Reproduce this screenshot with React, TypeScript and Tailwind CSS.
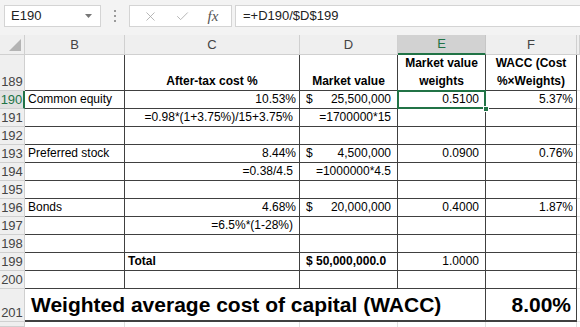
import { X, Check } from 'lucide-react';
import type { ReactNode } from 'react';

const font = { fontFamily: '"Liberation Sans", Arial, sans-serif' };

function Hdr({ children, active = false }: { children?: ReactNode; active?: boolean }) {
  return (
    <div
      className={
        active
          ? 'flex items-center justify-center bg-[#d2d2d2] border-r border-r-[#c6c6c6] border-b-2 border-b-[#217346] text-[#217346] text-[13px]'
          : 'flex items-center justify-center bg-[#efefef] border-r border-b border-[#d0d0d0] text-[#444] text-[13px]'
      }
    >
      {children}
    </div>
  );
}

function Num({ n, active = false }: { n: number | string; active?: boolean }) {
  return (
    <div
      className={
        active
          ? 'flex items-end justify-center bg-[#e1e1e1] border-r-2 border-r-[#217346] border-b border-b-[#d0d0d0] text-[#217346] text-[13px] leading-[17px]'
          : 'flex items-end justify-center bg-[#efefef] border-r border-b border-[#d0d0d0] text-[#444] text-[13px] leading-[17px]'
      }
    >
      {n}
    </div>
  );
}

function Cell({
  children,
  className = '',
  mid = false,
}: {
  children?: ReactNode;
  className?: string;
  mid?: boolean;
}) {
  return (
    <div
      className={`relative flex ${mid ? 'items-center' : 'items-end'} whitespace-nowrap border-r border-b border-[#404040] text-[12px] leading-[17px] text-black ${className}`}
    >
      {children}
    </div>
  );
}

function Acct({ v }: { v: string }) {
  return (
    <Cell className="justify-between pl-[6px] pr-[6px]">
      <span>$</span>
      <span>{v}</span>
    </Cell>
  );
}

function Empty({ n }: { n: number }) {
  return (
    <>
      <Num n={n} />
      <Cell />
      <Cell />
      <Cell />
      <Cell />
      <Cell />
      <div className="border-b border-[#e0e0e0]" />
    </>
  );
}

export default function App() {
  return (
    <div className="w-[580px] h-[327px] overflow-hidden bg-white" style={font}>
      {/* formula bar */}
      <div className="h-[35px] bg-[#f3f3f3] flex items-start pt-[5px] pl-[4px]">
        <div className="w-[97px] h-[22px] bg-white border border-[#d4d4d4] flex items-center justify-between pl-[6px] pr-[8px] text-[13px] text-[#222]">
          <span>E190</span>
          <svg width="7" height="4" viewBox="0 0 7 4">
            <path d="M0 0h7L3.5 4z" fill="#777" />
          </svg>
        </div>
        <div className="w-[28px] h-[22px] flex flex-col items-center justify-center gap-[3px]">
          <span className="w-[2px] h-[2px] bg-[#9a9a9a]" />
          <span className="w-[2px] h-[2px] bg-[#9a9a9a]" />
          <span className="w-[2px] h-[2px] bg-[#9a9a9a]" />
        </div>
        <div className="w-[103px] h-[22px] bg-white border border-[#d4d4d4] flex items-center justify-around px-[4px]">
          <X size={15} strokeWidth={1.3} color="#a6a6a6" />
          <Check size={15} strokeWidth={1.3} color="#a6a6a6" />
          <span className="italic text-[15px] text-[#555]" style={{ fontFamily: '"Liberation Serif", serif' }}>
            fx
          </span>
        </div>
        <div className="flex-1 ml-[3px] h-[22px] bg-white border border-r-0 border-[#d4d4d4] flex items-center pl-[7px] text-[13px] text-[#222]">
          =+D190/$D$199
        </div>
      </div>

      {/* sheet */}
      <div className="grid grid-cols-[25px_100px_175px_98px_88px_91px_1fr] grid-rows-[20px_36px_repeat(11,18px)_33px_1fr] h-[292px]">
        {/* column headers */}
        <div className="relative bg-[#efefef] border-r border-b border-[#d0d0d0]">
          <svg className="absolute right-[3px] bottom-[3px]" width="12" height="12" viewBox="0 0 12 12">
            <path d="M12 0V12H0z" fill="#b4b4b4" />
          </svg>
        </div>
        <Hdr>B</Hdr>
        <Hdr>C</Hdr>
        <Hdr>D</Hdr>
        <Hdr active>E</Hdr>
        <Hdr>F</Hdr>
        <Hdr />

        {/* 189 */}
        <Num n={189} />
        <Cell />
        <Cell className="justify-center font-bold">After-tax cost %</Cell>
        <Cell className="justify-center font-bold">Market value</Cell>
        <Cell className="justify-center font-bold text-center">
          <span className="leading-[18px]">
            Market value
            <br />
            weights
          </span>
        </Cell>
        <Cell className="justify-center font-bold text-center">
          <span className="leading-[18px]">
            WACC (Cost
            <br />
            %×Weights)
          </span>
        </Cell>
        <div className="border-b border-[#e0e0e0]" />

        {/* 190 */}
        <Num n={190} active />
        <Cell className="pl-[3px]">Common equity</Cell>
        <Cell className="justify-end pr-[3px]">10.53%</Cell>
        <Acct v="25,500,000" />
        <Cell className="justify-end pr-[6px]">
          0.5100
          <div className="absolute -top-[1px] -left-[1px] -right-[1px] -bottom-[1px] border-2 border-[#217346] z-10" />
          <div className="absolute -right-[4px] -bottom-[4px] w-[6px] h-[6px] bg-[#217346] border border-white z-20" />
        </Cell>
        <Cell className="justify-end pr-[3px]">5.37%</Cell>
        <div className="border-b border-[#e0e0e0]" />

        {/* 191 */}
        <Num n={191} />
        <Cell />
        <Cell className="justify-end pr-[6px]">=0.98*(1+3.75%)/15+3.75%</Cell>
        <Cell className="justify-end pr-[6px]">=1700000*15</Cell>
        <Cell />
        <Cell />
        <div className="border-b border-[#e0e0e0]" />

        <Empty n={192} />

        {/* 193 */}
        <Num n={193} />
        <Cell className="pl-[3px]">Preferred stock</Cell>
        <Cell className="justify-end pr-[3px]">8.44%</Cell>
        <Acct v="4,500,000" />
        <Cell className="justify-end pr-[6px]">0.0900</Cell>
        <Cell className="justify-end pr-[3px]">0.76%</Cell>
        <div className="border-b border-[#e0e0e0]" />

        {/* 194 */}
        <Num n={194} />
        <Cell />
        <Cell className="justify-end pr-[6px]">=0.38/4.5</Cell>
        <Cell className="justify-end pr-[6px]">=1000000*4.5</Cell>
        <Cell />
        <Cell />
        <div className="border-b border-[#e0e0e0]" />

        <Empty n={195} />

        {/* 196 */}
        <Num n={196} />
        <Cell className="pl-[3px]">Bonds</Cell>
        <Cell className="justify-end pr-[3px]">4.68%</Cell>
        <Acct v="20,000,000" />
        <Cell className="justify-end pr-[6px]">0.4000</Cell>
        <Cell className="justify-end pr-[3px]">1.87%</Cell>
        <div className="border-b border-[#e0e0e0]" />

        {/* 197 */}
        <Num n={197} />
        <Cell />
        <Cell className="justify-end pr-[6px]">=6.5%*(1-28%)</Cell>
        <Cell />
        <Cell />
        <Cell />
        <div className="border-b border-[#e0e0e0]" />

        <Empty n={198} />

        {/* 199 */}
        <Num n={199} />
        <Cell />
        <Cell className="pl-[3px] font-bold text-[11px]">Total</Cell>
        <Cell className="pl-[6px] font-bold text-[11px]">$ 50,000,000.0</Cell>
        <Cell className="justify-end pr-[6px] text-[11px]">1.0000</Cell>
        <Cell />
        <div className="border-b border-[#e0e0e0]" />

        <Empty n={200} />

        {/* 201 */}
        <Num n={201} />
        <Cell mid className="col-span-4 pl-[6px] font-bold text-[21px] border-b-2">
          Weighted average cost of capital (WACC)
        </Cell>
        <Cell mid className="justify-end pr-[5px] font-bold text-[21px] border-b-2">
          8.00%
        </Cell>
        <div className="border-b border-[#e0e0e0]" />

        {/* 202 */}
        <Num n="" />
        <div className="border-r border-[#e0e0e0]" />
        <div className="border-r border-[#e0e0e0]" />
        <div className="border-r border-[#e0e0e0]" />
        <div className="border-r border-[#e0e0e0]" />
        <div className="border-r border-[#e0e0e0]" />
        <div />
      </div>
    </div>
  );
}
